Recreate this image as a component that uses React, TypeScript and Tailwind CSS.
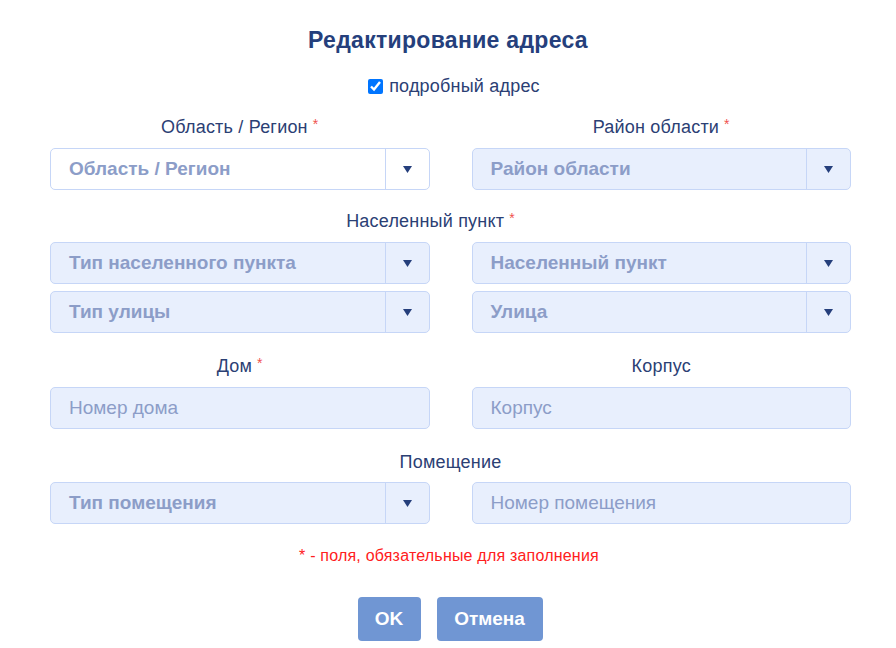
import React from "react";

function Label({ text, req }: { text: string; req?: boolean }) {
  return (
    <div className="h-[20px] flex items-center justify-center text-[18px] tracking-[0.2px] text-[#2b4074]">
      <span>{text}</span>
      {req && <span className="ml-[5px] text-[#f0524e] text-[14px] relative top-[-3px]">*</span>}
    </div>
  );
}

function Select({ text, white }: { text: string; white?: boolean }) {
  return (
    <div
      className={`h-[42px] flex items-stretch border border-[#c6d6f7] rounded-[5px] ${
        white ? "bg-white" : "bg-[#e8effd]"
      }`}
    >
      <div className="flex-1 flex items-center pl-[18px] text-[19px] font-bold text-[#8c9dc8]">{text}</div>
      <div className="w-[44px] border-l border-[#c6d6f7] flex items-center justify-center">
        <svg width="9" height="7" viewBox="0 0 9 7">
          <path d="M0 0 H9 L4.5 7 Z" fill="#253f7c" />
        </svg>
      </div>
    </div>
  );
}

function Input({ text }: { text: string }) {
  return (
    <div className="h-[42px] flex items-center border border-[#c6d6f7] rounded-[5px] bg-[#e8effd] pl-[18px] text-[19px] text-[#8c9dc8]">
      {text}
    </div>
  );
}

export default function App() {
  return (
    <div className="w-[896px] h-[648px] bg-white font-['Liberation_Sans',Arial,sans-serif]">
      <div className="pt-[26px] h-[54px] flex items-center justify-center text-[23px] tracking-[0.3px] font-bold text-[#253f7c] leading-[28px]">
        Редактирование адреса
      </div>
      <div className="mt-[22px] h-[20px] pl-[12px] flex items-center justify-center text-[18px] tracking-[0.2px] text-[#2b4074]">
        <input type="checkbox" defaultChecked className="w-[15px] h-[15px] mr-[6px]" />
        <span>подробный адрес</span>
      </div>
      <div className="ml-[50px] w-[801px] grid grid-cols-2 gap-x-[42px]">
        <div className="mt-[21px]">
          <Label text="Область / Регион" req />
        </div>
        <div className="mt-[21px]">
          <Label text="Район области" req />
        </div>
        <div className="mt-[11px]">
          <Select text="Область / Регион" white />
        </div>
        <div className="mt-[11px]">
          <Select text="Район области" />
        </div>
        <div className="col-span-2 mt-[21px] pr-[40px]">
          <Label text="Населенный пункт" req />
        </div>
        <div className="mt-[11px]">
          <Select text="Тип населенного пункта" />
        </div>
        <div className="mt-[11px]">
          <Select text="Населенный пункт" />
        </div>
        <div className="mt-[7px]">
          <Select text="Тип улицы" />
        </div>
        <div className="mt-[7px]">
          <Select text="Улица" />
        </div>
        <div className="mt-[23px]">
          <Label text="Дом" req />
        </div>
        <div className="mt-[23px]">
          <Label text="Корпус" />
        </div>
        <div className="mt-[11px]">
          <Input text="Номер дома" />
        </div>
        <div className="mt-[11px]">
          <Input text="Корпус" />
        </div>
        <div className="col-span-2 mt-[23px]">
          <Label text="Помещение" />
        </div>
        <div className="mt-[10px]">
          <Select text="Тип помещения" />
        </div>
        <div className="mt-[10px]">
          <Input text="Номер помещения" />
        </div>
      </div>
      <div className="mt-[22px] h-[20px] pl-[2px] flex items-center justify-center text-[16px] tracking-[0.2px] text-[#ff2020]">
        * - поля, обязательные для заполнения
      </div>
      <div className="mt-[31px] pl-[4px] flex justify-center gap-[16px]">
        <button className="h-[44px] w-[63px] rounded-[4px] bg-[#7096d3] text-white font-bold text-[19px]">OK</button>
        <button className="h-[44px] w-[106px] rounded-[4px] bg-[#7096d3] text-white font-bold text-[19px]">Отмена</button>
      </div>
    </div>
  );
}
